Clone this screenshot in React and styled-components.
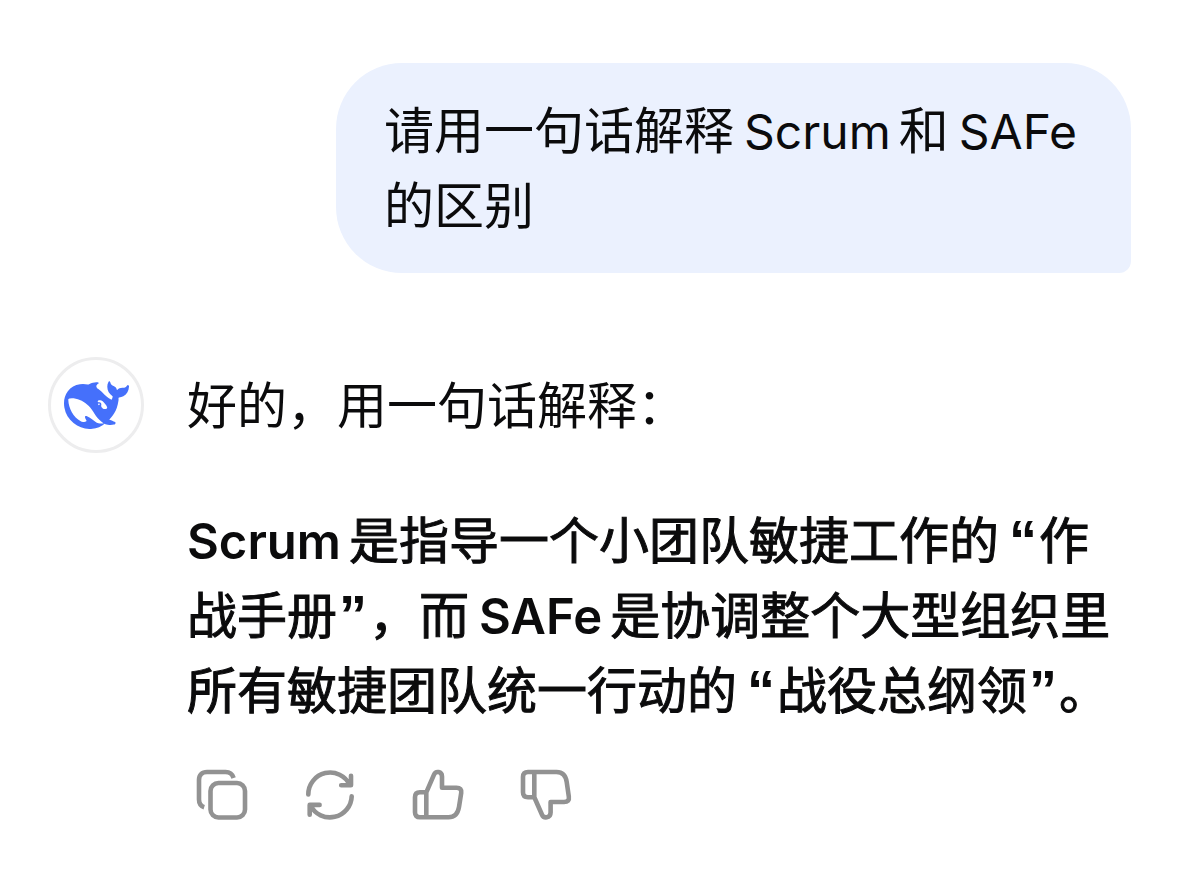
import React from "react";
import styled, { createGlobalStyle } from "styled-components";

const GlobalStyle = createGlobalStyle`
  * { box-sizing: border-box; }
  body {
    margin: 0;
    background: #ffffff;
    color: #0b0b0c;
    font-family: Inter, "Noto Sans CJK SC", sans-serif;
    font-size: 50px;
    line-height: 75px;
  }
`;

const Chat = styled.main`
  display: flex;
  flex-direction: column;
  gap: 84px;
  padding: 63px 48px;
`;

const UserRow = styled.div`
  display: flex;
  justify-content: flex-end;
  padding-left: 288px;
`;

const Bubble = styled.p`
  margin: 0;
  padding: 31px 48px 29px;
  border-radius: 66px 66px 12px 66px;
  background: #ebf1fe;
`;

const AssistantRow = styled.article`
  display: flex;
  align-items: flex-start;
  gap: 43px;
`;

const Avatar = styled.div`
  display: flex;
  flex: none;
  align-items: center;
  justify-content: center;
  width: 96px;
  height: 96px;
  border: 3px solid #ededee;
  border-radius: 50%;
  color: #4570fb;
`;

const Reply = styled.div`
  flex: 1;
  min-width: 0;
  padding-top: 12px;
`;

const Paragraph = styled.p`
  margin: 0 0 60px;
`;

/* The CJK family has no semibold cut, so a thin outline thickens the regular one. */
const Summary = styled.strong`
  display: block;
  margin-bottom: 39px;
  font-weight: 400;
  -webkit-text-stroke: 1px currentColor;
`;

const Latin = styled.span`
  font-size: 48px;
  line-height: 1;
  margin-left: ${(p) => (p.$start ? 0 : 10)}px;
  margin-right: ${(p) => (p.$end ? 0 : 8)}px;

  ${Summary} & {
    font-size: 49px;
    font-weight: 600;
    -webkit-text-stroke: 0;
  }
`;

const Quote = styled.span`
  font-family: "Liberation Sans", sans-serif;
  font-size: 56px;
  font-weight: 700;
  line-height: 1;
  margin-left: ${(p) => (p.$open ? 10 : 2)}px;
  margin-right: 2px;
  -webkit-text-stroke: 0;
`;

const Actions = styled.div`
  display: flex;
  gap: 54px;
  padding-left: 8px;
`;

const IconButton = styled.button`
  display: flex;
  width: 54px;
  height: 54px;
  padding: 0;
  border: 0;
  background: none;
  color: #929292;
  cursor: pointer;
`;

function Icon({ children }) {
  return (
    <svg width="54" height="54" viewBox="0 0 54 54" fill="none" stroke="currentColor" strokeWidth="4.6" strokeLinejoin="round" aria-hidden="true">
      {children}
    </svg>
  );
}

function Whale() {
  return (
    <svg width="65" height="65" viewBox="0 0 24 24" fill="currentColor" fillRule="evenodd" aria-hidden="true">
      <path d="M23.748 4.482c-.254-.124-.364.113-.512.234-.051.039-.094.09-.137.136-.372.397-.806.657-1.373.626-.829-.046-1.537.214-2.163.848-.133-.782-.575-1.248-1.247-1.548-.352-.156-.708-.311-.955-.65-.172-.241-.219-.51-.305-.774-.055-.16-.11-.323-.293-.35-.2-.031-.278.136-.356.276-.313.572-.434 1.202-.422 1.84.027 1.436.633 2.58 1.838 3.393.137.093.172.187.129.323-.082.28-.18.552-.266.833-.055.179-.137.217-.329.14a5.526 5.526 0 01-1.736-1.18c-.857-.828-1.631-1.742-2.597-2.458a11.365 11.365 0 00-.689-.471c-.985-.957.13-1.743.388-1.836.27-.098.093-.432-.779-.428-.872.004-1.67.295-2.687.684a3.055 3.055 0 01-.465.137 9.597 9.597 0 00-2.883-.102c-1.885.21-3.39 1.102-4.497 2.623C.082 8.606-.231 10.684.152 12.85c.403 2.284 1.569 4.175 3.36 5.653 1.858 1.533 3.997 2.284 6.438 2.14 1.482-.085 3.133-.284 4.994-1.86.47.234.962.327 1.78.397.63.059 1.236-.03 1.705-.128.735-.156.684-.837.419-.961-2.155-1.004-1.682-.595-2.113-.926 1.096-1.296 2.746-2.642 3.392-7.003.05-.347.007-.565 0-.845-.004-.17.035-.237.23-.256a4.173 4.173 0 001.545-.475c1.396-.763 1.96-2.015 2.093-3.517.02-.23-.004-.467-.247-.588zM11.581 18c-2.089-1.642-3.102-2.183-3.52-2.16-.392.024-.321.471-.235.763.09.288.207.486.371.739.114.167.192.416-.113.603-.673.416-1.842-.14-1.897-.167-1.361-.802-2.5-1.86-3.301-3.307-.774-1.393-1.224-2.887-1.298-4.482-.02-.386.093-.522.477-.592a4.696 4.696 0 011.529-.039c2.132.312 3.946 1.265 5.468 2.774.868.86 1.525 1.887 2.202 2.891.72 1.066 1.494 2.082 2.48 2.914.348.292.625.514.891.677-.802.09-2.14.11-3.054-.614zm1-6.44a.306.306 0 01.415-.287.302.302 0 01.2.288.306.306 0 01-.31.307.303.303 0 01-.304-.308zm3.11 1.596c-.2.081-.399.151-.59.16a1.245 1.245 0 01-.798-.254c-.274-.23-.47-.358-.552-.758a1.73 1.73 0 01.016-.588c.07-.327-.008-.537-.239-.727-.187-.156-.426-.199-.688-.199a.559.559 0 01-.254-.078c-.11-.054-.2-.19-.114-.358.028-.054.16-.186.192-.21.356-.202.767-.136 1.146.016.352.144.618.408 1.001.782.391.451.462.576.685.914.176.265.336.537.445.848.067.195-.019.354-.25.452z" />
    </svg>
  );
}

export default function App() {
  return (
    <>
      <GlobalStyle />
      <Chat lang="zh-CN">
        <UserRow>
          <Bubble>
            请用一句话解释<Latin>Scrum</Latin>和<Latin $end>SAFe</Latin>的区别
          </Bubble>
        </UserRow>
        <AssistantRow>
          <Avatar>
            <Whale />
          </Avatar>
          <Reply>
            <Paragraph>好的，用一句话解释：</Paragraph>
            <Summary>
              <Latin $start>Scrum</Latin>是指导一个小团队敏捷工作的<Quote $open>“</Quote>作战手册<Quote>”</Quote>，而<Latin>SAFe</Latin>是协调整个大型组织里所有敏捷团队统一行动的<Quote $open>“</Quote>战役总纲领<Quote>”</Quote>。
            </Summary>
            <Actions>
              <IconButton type="button" aria-label="复制">
                <Icon>
                  <rect x="15.5" y="15" width="34.5" height="34.5" rx="8" />
                  <path d="M38.600 10C37.400 5.800 34.600 4 30.500 4H12C7 4 4 7 4 12V31.500C4 35.500 6 38.200 9.200 39.200" />
                </Icon>
              </IconButton>
              <IconButton type="button" aria-label="重新生成">
                <Icon>
                  <g strokeLinecap="round">
                    <path d="M5.300 26.500A21.800 21.800 0 0 1 46.800 17M48 7.700V17.300H38.200" />
                    <path d="M48.700 28.300A21.800 21.800 0 0 1 7.500 37.500M6.700 46.800V36.900H16.600" />
                  </g>
                </Icon>
              </IconButton>
              <IconButton type="button" aria-label="赞">
                <Icon>
                  <path d="M15.300 49.300H9Q4 49.300 4 44.300V29.300Q4 24.300 9 24.300H15.300L23 6.700C24.800 2.500 30.900 3.300 31 8.500V19.800H45.500Q51 19.800 50.200 25L48 39Q46.300 49.300 37.500 49.300ZM15.300 24.300V49.300" />
                </Icon>
              </IconButton>
              <IconButton type="button" aria-label="踩">
                <Icon>
                  <path d="M15.300 4H9Q4 4 4 9V24.300Q4 29.300 9 29.300H15.300L22.800 46.300C24.600 50.800 31.500 50.500 31.600 44.500V34H45Q50.700 34 49.800 28.500L47.700 14Q46.300 4 37.500 4ZM15.300 4V29.300" />
                </Icon>
              </IconButton>
            </Actions>
          </Reply>
        </AssistantRow>
      </Chat>
    </>
  );
}
